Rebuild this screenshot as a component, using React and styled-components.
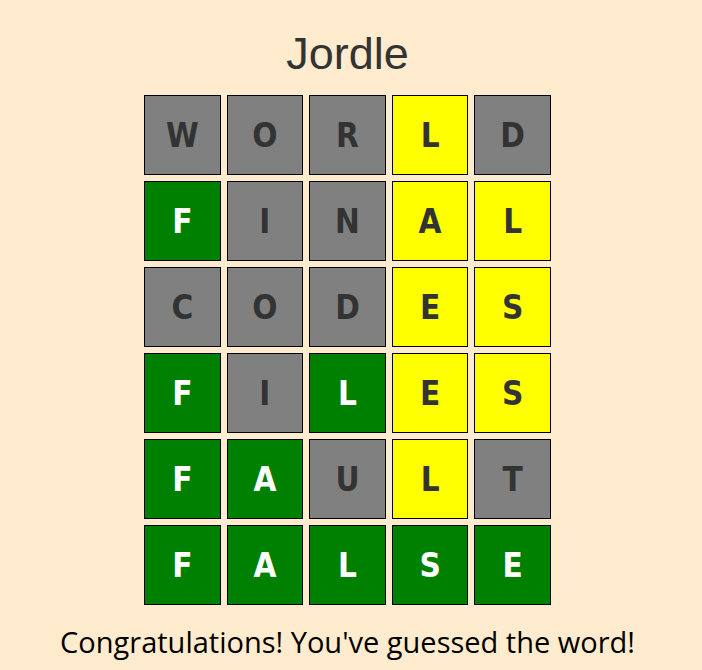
import React from "react";
import styled, { createGlobalStyle } from "styled-components";

const GlobalStyle = createGlobalStyle`
  body { margin: 0; background: #ffebcd; }
`;

const Page = styled.main`
  box-sizing: border-box;
  min-height: 100vh;
  padding: 29px 7px 0 0;
  display: flex;
  flex-direction: column;
  align-items: center;
  background: #ffebcd;
`;

const Title = styled.h1`
  margin: 0 0 16px;
  font: 400 45px/50px "Liberation Sans", Arial, sans-serif;
  color: #333;
`;

const Board = styled.div`
  width: min(100%, 407px);
  display: grid;
  gap: 6px;
`;

const Row = styled.div`
  display: grid;
  grid-template-columns: repeat(5, 1fr);
  gap: 6px;
`;

const fills = { absent: "#808080", present: "#ffff00", correct: "#008000" };

const Tile = styled.div`
  box-sizing: border-box;
  height: 80px;
  padding-top: 2px;
  display: flex;
  align-items: center;
  justify-content: center;
  border: 1px solid #000;
  background: ${({ $state }) => fills[$state]};
  color: ${({ $state }) => ($state === "correct" ? "#fff" : "#333")};
  font: 700 33px/40px "DejaVu Sans Condensed", Tahoma, sans-serif;
`;

const Message = styled.p`
  margin: 15px 0 0;
  font: 400 29px/44px "Open Sans", "Segoe UI", sans-serif;
  color: #000;
`;

const guesses = [
  ["WORLD", "aaapa"],
  ["FINAL", "caapp"],
  ["CODES", "aaapp"],
  ["FILES", "cacpp"],
  ["FAULT", "ccapa"],
  ["FALSE", "ccccc"],
];

const states = { a: "absent", p: "present", c: "correct" };

export default function App() {
  return (
    <Page>
      <GlobalStyle />
      <Title>Jordle</Title>
      <Board>
        {guesses.map(([word, marks]) => (
          <Row key={word}>
            {[...word].map((letter, i) => (
              <Tile key={i} $state={states[marks[i]]}>{letter}</Tile>
            ))}
          </Row>
        ))}
      </Board>
      <Message role="status">Congratulations! You've guessed the word!</Message>
    </Page>
  );
}
